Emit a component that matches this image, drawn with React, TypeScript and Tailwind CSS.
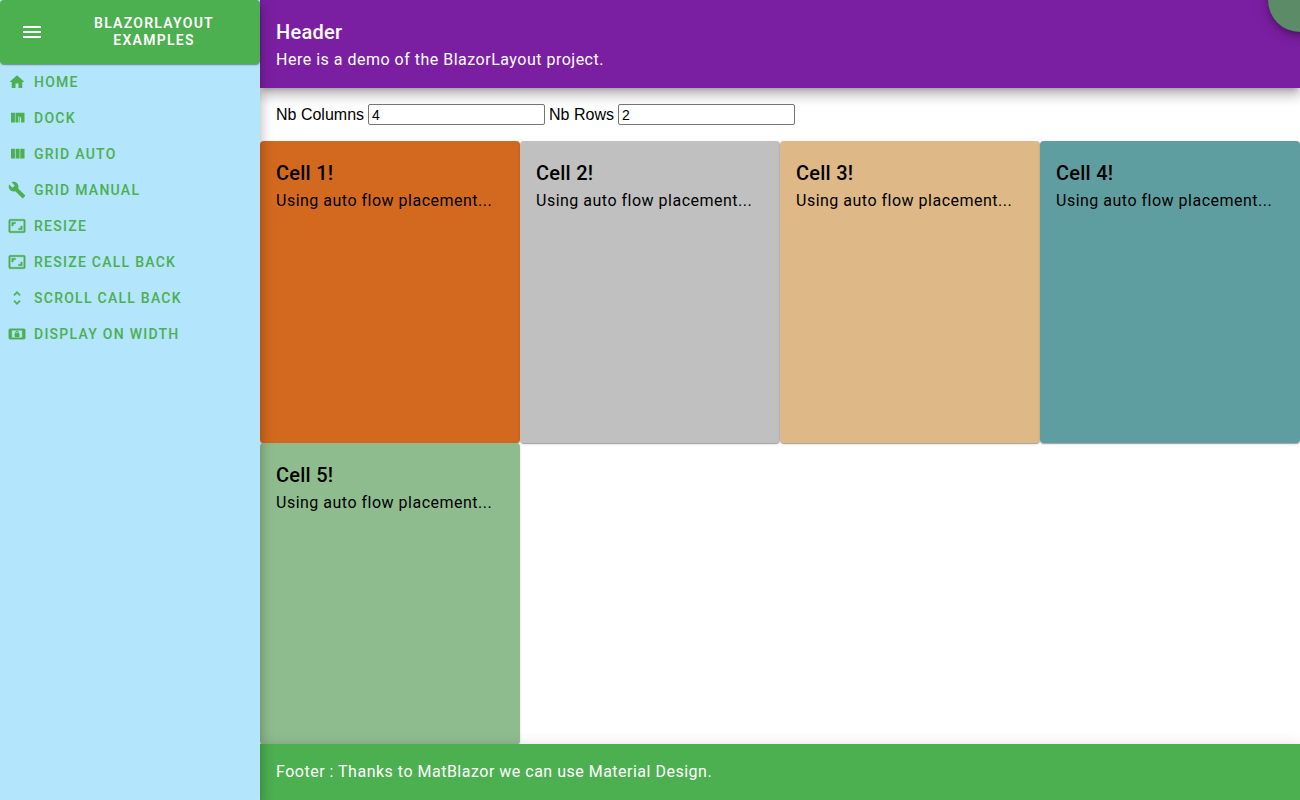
import { useState } from 'react';

const ICONS = {
  home: 'M10 20v-6h4v6h5v-8h3L12 3 2 12h3v8z',
  dock: 'M4 5h5.2v13H4zM10 5h12v13h-4.5v-7h-1.6v7H15V9.500h-1.200V18H10z',
  columns: 'M4 5h5.200v13H4zM10.200 5h5.200v13h-5.200zM16.400 5h5.600v13h-5.600z',
  build:
    'M22.7 19l-9.1-9.1c.9-2.3.4-5-1.5-6.9-2-2-5-2.4-7.4-1.3L9 6 6 9 1.6 4.7C.4 7.1.9 10.1 2.9 12.1c1.9 1.9 4.6 2.4 6.9 1.5l9.1 9.1c.4.4 1 .4 1.4 0l2.3-2.3c.5-.4.5-1.1.1-1.4z',
  aspect:
    'M19 12h-2v3h-3v2h5v-5zM7 9h3V7H5v5h2V9zm14-6H3c-1.1 0-2 .9-2 2v14c0 1.1.9 2 2 2h18c1.1 0 2-.9 2-2V5c0-1.1-.9-2-2-2zm0 16.01H3V4.99h18v14.02z',
  unfold:
    'M12 5.83L15.17 9l1.41-1.41L12 3 7.41 7.59 8.83 9 12 5.83zm0 12.34L8.83 15l-1.41 1.41L12 21l4.59-4.59L15.17 15 12 18.17z',
  lock: 'M21 5H3c-1.1 0-2 .9-2 2v10c0 1.1.9 2 2 2h18c1.1 0 2-.9 2-2V7c0-1.1-.9-2-2-2zm-2 12H5V7h14v10zm-9-1h4c.55 0 1-.45 1-1v-3c0-.55-.45-1-1-1v-1c0-1.11-.9-2-2-2-1.11 0-2 .9-2 2v1c-.55 0-1 .45-1 1v3c0 .55.45 1 1 1zm.8-6c0-.66.54-1.2 1.2-1.2.66 0 1.2.54 1.2 1.2v1h-2.4v-1z',
  menu: 'M3 18h18v-2H3v2zm0-5h18v-2H3v2zm0-7v2h18V6H3z',
};

type IconName = keyof typeof ICONS;

// Line icons that need extra weight to stay crisp at 18px.
const OUTLINED: IconName[] = ['aspect', 'unfold', 'lock'];

const LINKS: { label: string; icon: IconName }[] = [
  { label: 'Home', icon: 'home' },
  { label: 'Dock', icon: 'dock' },
  { label: 'Grid Auto', icon: 'columns' },
  { label: 'Grid Manual', icon: 'build' },
  { label: 'Resize', icon: 'aspect' },
  { label: 'Resize Call Back', icon: 'aspect' },
  { label: 'Scroll Call Back', icon: 'unfold' },
  { label: 'Display On Width', icon: 'lock' },
];

const CELLS = ['bg-[#d2691e]', 'bg-[#c0c0c0]', 'bg-[#deb887]', 'bg-[#5f9ea0]', 'bg-[#8fbc8f]'];

function Icon({ name, className }: { name: IconName; className: string }) {
  return (
    <svg
      viewBox="0 0 24 24"
      fill="currentColor"
      stroke={OUTLINED.includes(name) ? 'currentColor' : 'none'}
      strokeWidth="0.5"
      className={className}
      aria-hidden="true"
    >
      <path d={ICONS[name]} />
    </svg>
  );
}

function Sidebar() {
  return (
    <aside className="z-20 flex w-[260px] shrink-0 flex-col bg-[#b3e5fc] text-sm font-medium tracking-[0.09em] uppercase shadow-[0_5px_5px_-3px_rgba(0,0,0,0.2),0_8px_10px_1px_rgba(0,0,0,0.14),0_3px_14px_2px_rgba(0,0,0,0.12)]">
      <div className="flex h-16 items-center rounded-sm bg-[#4caf50] text-white shadow-[0_2px_1px_-1px_rgba(0,0,0,0.2),0_1px_1px_0_rgba(0,0,0,0.14),0_1px_3px_0_rgba(0,0,0,0.12)]">
        <button type="button" aria-label="Menu" className="p-5">
          <Icon name="menu" className="size-6" />
        </button>
        <a href="#" className="mr-4 flex-1 px-6 text-center leading-[17px] font-semibold">
          BlazorLayout Examples
        </a>
      </div>
      <nav className="flex flex-col text-[#4caf50]">
        {LINKS.map((link) => (
          <a key={link.label} href="#" className="flex h-9 items-center gap-2 px-2">
            <Icon name={link.icon} className="size-[18px]" />
            {link.label}
          </a>
        ))}
      </nav>
    </aside>
  );
}

export default function App() {
  const [columns, setColumns] = useState('4');
  const [rows, setRows] = useState('2');
  const field =
    'h-[21px] w-[177px] rounded-xs border border-[#767676] bg-white px-[3px] text-sm leading-[17px]';

  return (
    <div className="relative flex h-screen overflow-hidden bg-white font-[Roboto,sans-serif] text-black">
      <Sidebar />
      <div className="flex min-w-0 flex-1 flex-col">
        <header className="z-10 bg-[#7b1fa2] p-4 text-white shadow-[0_5px_5px_-3px_rgba(0,0,0,0.2),0_8px_10px_1px_rgba(0,0,0,0.14),0_3px_14px_2px_rgba(0,0,0,0.12)]">
          <h1 className="text-xl leading-8 font-medium tracking-[0.0125em]">Header</h1>
          <p className="text-base leading-6 tracking-[0.03125em]">
            Here is a demo of the BlazorLayout project.
          </p>
        </header>
        <main className="flex min-h-0 flex-1 flex-col">
          <form className="flex items-center gap-1 p-4 font-['Liberation_Sans',sans-serif] text-base leading-5">
            <label htmlFor="columns">Nb Columns</label>
            <input id="columns" value={columns} onChange={(e) => setColumns(e.target.value)} className={field} />
            <label htmlFor="rows">Nb Rows</label>
            <input id="rows" value={rows} onChange={(e) => setRows(e.target.value)} className={field} />
          </form>
          <div className="grid flex-1 grid-cols-4 grid-rows-2">
            {CELLS.map((color, i) => (
              <section
                key={color}
                className={`rounded-sm p-4 shadow-[0_2px_1px_-1px_rgba(0,0,0,0.2),0_1px_1px_0_rgba(0,0,0,0.14),0_1px_3px_0_rgba(0,0,0,0.12)] ${color}`}
              >
                <h2 className="text-xl leading-8 font-medium tracking-[0.0125em]">Cell {i + 1}!</h2>
                <p className="text-base leading-6 tracking-[0.03125em]">Using auto flow placement...</p>
              </section>
            ))}
          </div>
        </main>
        <footer className="z-10 bg-[#4caf50] p-4 text-base leading-6 tracking-[0.03125em] text-white shadow-[0_5px_5px_-3px_rgba(0,0,0,0.2),0_8px_10px_1px_rgba(0,0,0,0.14),0_3px_14px_2px_rgba(0,0,0,0.12)]">
          Footer : Thanks to MatBlazor we can use Material Design.
        </footer>
      </div>
      <button
        type="button"
        aria-label="Source code"
        className="absolute -top-8 -right-8 z-30 size-16 rounded-full bg-[#5b8c67] shadow-[0_3px_5px_-1px_rgba(0,0,0,0.2),0_6px_10px_0_rgba(0,0,0,0.14),0_1px_18px_0_rgba(0,0,0,0.12)]"
      />
    </div>
  );
}
